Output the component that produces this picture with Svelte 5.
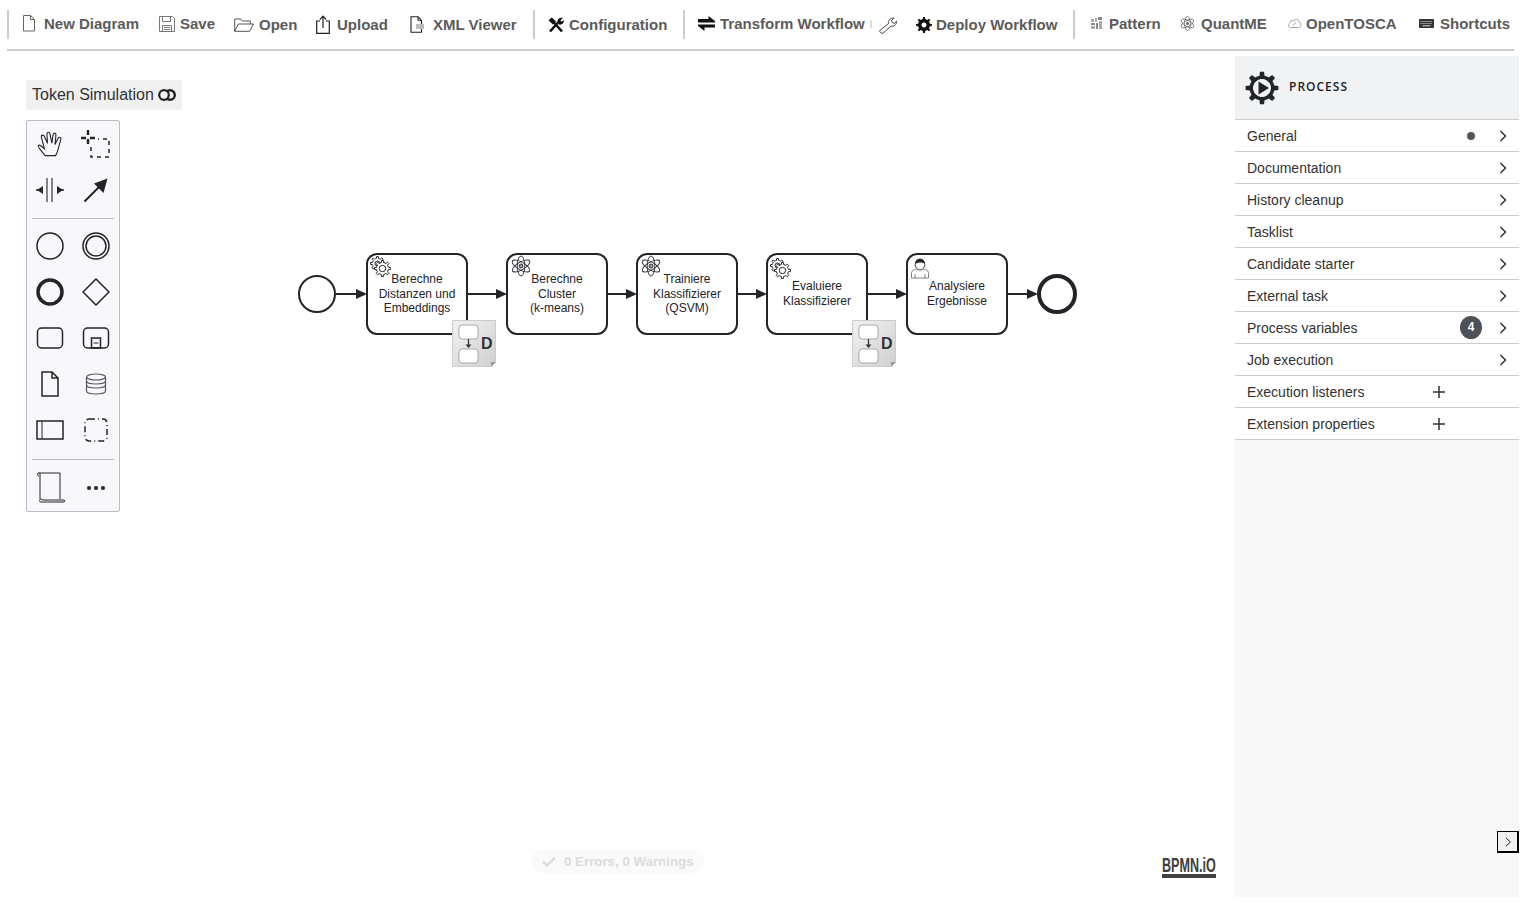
<script>
  const tools = [
    { id: 'sep', w: 15, sep: true },
    { id: 'new', label: 'New Diagram', w: 137, iw: 22 },
    { id: 'save', label: 'Save', w: 75, iw: 21 },
    { id: 'open', label: 'Open', w: 82, iw: 25, dy: 1 },
    { id: 'upload', label: 'Upload', w: 94, iw: 21, dy: 1 },
    { id: 'xml', label: 'XML Viewer', w: 123, iw: 23, dy: 1 },
    { id: 'sep', w: 15, sep: true },
    { id: 'config', label: 'Configuration', w: 135, iw: 21, dy: 1 },
    { id: 'sep', w: 15, sep: true },
    { id: 'transform', label: 'Transform Workflow', w: 172, iw: 22, dy: 0 },
    { id: 'mini', w: 9, mini: true },
    { id: 'wrench', w: 37, iw: 18, dy: 2 },
    { id: 'gear', label: 'Deploy Workflow', w: 157, iw: 20, dy: 1 },
    { id: 'sep', w: 17, sep: true },
    { id: 'pattern', label: 'Pattern', w: 90, iw: 19 },
    { id: 'atom', label: 'QuantME', w: 107, iw: 21 },
    { id: 'cloud', label: 'OpenTOSCA', w: 132, iw: 19 },
    { id: 'keys', label: 'Shortcuts', w: 96, iw: 21 }
  ];

  const rows = [
    { label: 'General', dot: true, arrow: true },
    { label: 'Documentation', arrow: true },
    { label: 'History cleanup', arrow: true },
    { label: 'Tasklist', arrow: true },
    { label: 'Candidate starter', arrow: true },
    { label: 'External task', arrow: true },
    { label: 'Process variables', badge: 4, arrow: true },
    { label: 'Job execution', arrow: true },
    { label: 'Execution listeners', plus: true },
    { label: 'Extension properties', plus: true }
  ];

  const tasks = [
    { x: 367, icon: 'service', lines: ['Berechne', 'Distanzen und', 'Embeddings'], top: 283, deploy: true },
    { x: 507, icon: 'atom', lines: ['Berechne', 'Cluster', '(k-means)'], top: 283 },
    { x: 637, icon: 'atom', lines: ['Trainiere', 'Klassifizierer', '(QSVM)'], top: 283 },
    { x: 767, icon: 'service', lines: ['Evaluiere', 'Klassifizierer'], top: 290, deploy: true },
    { x: 907, icon: 'user', lines: ['Analysiere', 'Ergebnisse'], top: 290 }
  ];

  const arrows = [[336, 367], [467, 507], [607, 637], [737, 767], [867, 907], [1007, 1038]];

  function gear(cx, cy, ro, ri, n) {
    let d = '';
    const step = (Math.PI * 2) / n;
    for (let i = 0; i < n; i++) {
      const a = i * step;
      const pts = [
        [ri, a - step * 0.5],
        [ri, a - step * 0.26],
        [ro, a - step * 0.16],
        [ro, a + step * 0.16],
        [ri, a + step * 0.26]
      ];
      for (const [r, t] of pts) {
        d += (d ? 'L' : 'M') + (cx + r * Math.cos(t)).toFixed(2) + ' ' + (cy + r * Math.sin(t)).toFixed(2);
      }
    }
    return d + 'Z';
  }
</script>

{#snippet toolIcon(id)}
  {#if id === 'new'}
    <svg width="14" height="17" viewBox="0 0 14 17"><path d="M1.500.5h7l4 4v11.500h-11zM8.500.5v4h4" fill="#fff" stroke="#666" /></svg>
  {:else if id === 'save'}
    <svg width="16" height="16" viewBox="0 0 16 16"><path d="M.5.5h13l2 2v13H.5z" fill="#fff" stroke="#777" /><path d="M3.500.5v5h8v-5M3.500 15.500v-6h9v6M5 11.500h6M5 13.500h6" fill="none" stroke="#777" /></svg>
  {:else if id === 'open'}
    <svg width="20" height="14" viewBox="0 0 20 14"><path d="M.7 13.300V1h6l1.600 2h8v3M.7 13.300h15L19.400 6H4.300z" fill="#fff" stroke="#555" /></svg>
  {:else if id === 'upload'}
    <svg width="14" height="19" viewBox="0 0 14 19"><path d="M4 6H.7v12.300h12.600V6H10M7 13V1.500M3.800 4.700 7 1.200l3.200 3.500" fill="none" stroke="#222" stroke-width="1.200" /></svg>
  {:else if id === 'xml'}
    <svg width="15" height="17" viewBox="0 0 15 17"><path d="M1 .7h7l3.500 3.500v12H1zM8 .7v3.500h3.500" fill="#fff" stroke="#222" stroke-width="1.100" /><rect x="6" y="8" width="8" height="5" fill="#bbb" /></svg>
  {:else if id === 'config'}
    <svg width="16" height="16" viewBox="0 0 16 16"><path d="M2 14.500 11 4.500M14 14.500 5 4.500" stroke="#111" stroke-width="2.600" fill="none" /><path d="M.5 3.500 3.500.5 5 1.500 8 4.500 5 7.500zM9.500 4.500C9.500 2 12 0 15 1l-2.500 2.300 1 1.500 2.300-1.800c.6 3-2 5.500-4.800 4.500z" fill="#111" /></svg>
  {:else if id === 'transform'}
    <svg width="17" height="15" viewBox="0 0 17 15"><path d="M0 3h10.500V0L17 5v1.500H0zM17 8.500v3H6.500V15L0 10V8.500z" fill="#111" /></svg>
  {:else if id === 'wrench'}
    <svg width="18" height="17" viewBox="0 0 18 17"><path d="M.8 13.500 9.500 6.500C9 3.500 11.500.5 15 1.200l-2.500 2.500.8 2 2.200.6 2-2.200c.4 3.500-2.500 5.500-5.500 5L4 16.200c-1.200.8-4-1.300-3.200-2.700z" fill="#fff" stroke="#333" stroke-width=".9" /></svg>
  {:else if id === 'gear'}
    <svg width="16" height="16" viewBox="0 0 16 16"><path fill-rule="evenodd" d={gear(8, 8, 8, 6, 8) + 'M8 5.500a2.500 2.500 0 1 0 .01 0z'} fill="#111" /></svg>
  {:else if id === 'pattern'}
    <svg width="13" height="13" viewBox="0 0 13 13"><g fill="#aaa"><rect x="1" y="2" width="3" height="3" /><rect x="5" y="1" width="2" height="4" /><rect x="8" y="0" width="4" height="3" fill="#888" /><rect x="1" y="6" width="4" height="2" fill="#888" /><rect x="1" y="9" width="4" height="3" /><rect x="6" y="6" width="2" height="6" fill="#888" /><rect x="9" y="4" width="3" height="8" /></g></svg>
  {:else if id === 'atom'}
    <svg width="15" height="15" viewBox="0 0 15 15"><g fill="none" stroke="#666" stroke-width=".8"><ellipse cx="7.500" cy="7.500" rx="7" ry="3" transform="rotate(90 7.500 7.500)" /><ellipse cx="7.500" cy="7.500" rx="7" ry="3" transform="rotate(30 7.500 7.500)" /><ellipse cx="7.500" cy="7.500" rx="7" ry="3" transform="rotate(150 7.500 7.500)" /></g><circle cx="7.500" cy="7.500" r="1.500" fill="#666" /></svg>
  {:else if id === 'cloud'}
    <svg width="15" height="11" viewBox="0 0 15 11"><path d="M3.500 9.500C1 9.500.5 6.500 2.500 5.500 2.500 3 5 2 6.500 3 8 .5 11.500 1 12 4c2.500.3 3 5.500-.5 5.500z" fill="#fff" stroke="#999" stroke-width=".9" /><path d="M6 8l3-4" stroke="#aaa" /></svg>
  {:else if id === 'keys'}
    <svg width="15" height="9" viewBox="0 0 15 9"><rect width="15" height="9" rx="1" fill="#333" /><path d="M1.500 2.500h12M1.500 4.500h12" stroke="#ddd" stroke-dasharray="1 1" /><path d="M3.500 6.800h8" stroke="#ddd" /></svg>
  {/if}
{/snippet}

{#snippet deployIcon(x, y)}
  <g transform="translate({x} {y})">
    <path d="M0.500 0.500H43.500V42L39 46.500H0.500Z" fill="url(#paper)" stroke="#ccc" />
    <path d="M39 47V42H44Z" fill="#999" />
    <rect x="7" y="5" width="19" height="14" rx="3" fill="#fff" stroke="#aaa" />
    <rect x="7" y="29" width="19" height="14" rx="3" fill="#fff" stroke="#aaa" />
    <path d="M16.500 19V26" stroke="#333" stroke-width="1.200" />
    <path d="M13.500 24.500H19.500L16.500 28Z" fill="#333" />
    <text x="29" y="29" class="d">D</text>
  </g>
{/snippet}

{#snippet serviceIcon(x, y)}
  <g transform="translate({x} {y})" fill="#fff" stroke="#22242a" stroke-width="1">
    <path d={gear(7, 7, 7, 5.200, 8)} />
    <circle cx="7" cy="7" r="2.500" />
    <path d={gear(12, 12, 8, 6, 8)} />
    <circle cx="12" cy="12" r="3.200" />
  </g>
{/snippet}

{#snippet atomIcon(x, y)}
  <g transform="translate({x} {y})" fill="none" stroke="#22242a" stroke-width=".9">
    <ellipse rx="10" ry="3.800" transform="rotate(90)" />
    <ellipse rx="10" ry="3.800" transform="rotate(30)" />
    <ellipse rx="10" ry="3.800" transform="rotate(150)" />
    <circle r="2" fill="#999" />
  </g>
{/snippet}

{#snippet userIcon(x, y)}
  <g transform="translate({x} {y})">
    <path d="M.5 20V14.500C.5 12 5 11.500 6 10.500H12C13 11.500 17.500 12 17.500 14.500V20Z" fill="#fff" stroke="#777" stroke-width=".9" />
    <path d="M4 16v4M14 16v4" fill="none" stroke="#777" stroke-width=".9" />
    <ellipse cx="9" cy="6.500" rx="4.800" ry="5.500" fill="#fff" stroke="#22242a" stroke-width=".9" />
    <path d="M4.200 6C4.500 1.500 7 1 9 1s4.500.8 4.800 5C12 4 7 4 4.200 6Z" fill="#22242a" />
  </g>
{/snippet}

<div class="page">
  <nav class="toolbar">
    {#each tools as t}
      <div class="tool" style:width="{t.w}px" style:top="{t.sep ? 1 : (t.dy ?? 0)}px">
        {#if t.sep}
          <span class="sep"></span>
        {:else if t.mini}
          <span class="mini"></span>
        {:else}
          <span class="ico" style:width="{t.iw}px">{@render toolIcon(t.id)}</span>
          {#if t.label}<span class="lbl">{t.label}</span>{/if}
        {/if}
      </div>
    {/each}
  </nav>

  <main class="main">
    <section class="canvas">
      <svg class="diagram" width="1235" height="846" viewBox="0 51 1235 846">
        <defs>
          <linearGradient id="paper" x1="0" y1="0" x2="1" y2="1">
            <stop offset="0" stop-color="#f2f2f2" />
            <stop offset="1" stop-color="#cfcfcf" />
          </linearGradient>
        </defs>
        <circle cx="317" cy="294" r="18" class="ev" stroke-width="2" />
        <circle cx="1057" cy="294" r="18" class="ev" stroke-width="4" />
        {#each arrows as [a, b]}
          <path d="M{a} 294H{b - 8}" class="flow" />
          <path d="M{b - 11} 289L{b} 294L{b - 11} 299Z" fill="#22242a" />
        {/each}
        {#each tasks as t}
          <rect x={t.x} y="254" width="100" height="80" rx="10" class="task" />
          {#each t.lines as line, i}
            <text x={t.x + 50} y={t.top + i * 14.6} class="tl">{line}</text>
          {/each}
          {#if t.icon === 'service'}
            {@render serviceIcon(t.x + 3.500, t.x > 700 ? 258.500 : 256.500)}
          {:else if t.icon === 'atom'}
            {@render atomIcon(t.x + 14, 266)}
          {:else}
            {@render userIcon(t.x + 4, 258)}
          {/if}
          {#if t.deploy}
            {@render deployIcon(t.x + 85, 320)}
          {/if}
        {/each}
      </svg>

      <div class="token">Token Simulation
        <svg width="18" height="12" viewBox="0 0 18 12"><circle cx="12" cy="6" r="4.800" fill="#f0f0f0" stroke="#222" stroke-width="2.400" /><circle cx="6" cy="6" r="4.800" fill="#f0f0f0" stroke="#222" stroke-width="2.200" /></svg>
      </div>

      <div class="palette">
        <div class="cell"><svg width="26" height="27" viewBox="1.500 2.500 21 21"><path d="M8 22C6 19 2 15 2.500 14c.8-1.500 3 .5 5 2.500L5 7c-.3-1.800 1.800-2.200 2.500-.5L10 12 9.500 4.500c0-1.800 2.300-1.800 2.500 0L13.500 12l1-7c.2-1.800 2.400-1.500 2.300.3L16 13l2.500-5c.8-1.500 2.800-.8 2.200 1L18.500 17c-.5 2-1 3.500-2 5z" fill="none" stroke="#22242a" stroke-width=".9" /></svg></div>
        <div class="cell"><svg width="30" height="30" viewBox="0 0 30 30"><path d="M0 9h5M9 9h5M7 1v5M7 10v5" stroke="#22242a" stroke-width="2.500" fill="none" /><path d="M10 18v10h18V10H17" fill="none" stroke="#22242a" stroke-width="1.500" stroke-dasharray="4 4" /></svg></div>
        <div class="cell"><svg width="30" height="26" viewBox="0 0 30 26"><path d="M12 1v24M17 1v24" stroke="#22242a" stroke-width="1.100" /><path d="M1 13h3M26 13h3" stroke="#22242a" stroke-width="1.500" /><path d="M2 13l6-4v8zM28 13l-6-4v8z" fill="#22242a" /></svg></div>
        <div class="cell"><svg width="26" height="26" viewBox="0 0 26 26"><path d="M1.500 24.500 16 10" stroke="#22242a" stroke-width="2" /><path d="M24.500 1.500 20.500 16 11 6.500z" fill="#22242a" /></svg></div>
        <div class="rule"></div>
        <div class="cell"><svg width="28" height="28" viewBox="0 0 28 28"><circle cx="14" cy="14" r="13" class="pi" /></svg></div>
        <div class="cell"><svg width="28" height="28" viewBox="0 0 28 28"><circle cx="14" cy="14" r="13" class="pi" /><circle cx="14" cy="14" r="10" class="pi" /></svg></div>
        <div class="cell"><svg width="28" height="28" viewBox="0 0 28 28"><circle cx="14" cy="14" r="12" fill="none" stroke="#22242a" stroke-width="3.500" /></svg></div>
        <div class="cell"><svg width="28" height="28" viewBox="0 0 28 28"><path d="M14 1 27 14 14 27 1 14z" class="pi" /></svg></div>
        <div class="cell"><svg width="28" height="24" viewBox="0 0 28 24"><rect x="1.500" y="2" width="25" height="20" rx="4" class="pi" /></svg></div>
        <div class="cell"><svg width="28" height="24" viewBox="0 0 28 24"><rect x="1.500" y="2" width="25" height="20" rx="4" class="pi" /><rect x="9.500" y="12" width="9" height="10" class="pi" stroke-width="1" /><path d="M11.500 17h5" stroke="#22242a" /></svg></div>
        <div class="cell"><svg width="18" height="26" viewBox="0 0 18 26"><path d="M1 1h10l6 6v18H1zM11 1v6h6" class="pi" /></svg></div>
        <div class="cell"><svg width="22" height="22" viewBox="0 0 22 22"><path d="M1.500 4v14c0 4 19 4 19 0V4" class="pg" /><ellipse cx="11" cy="4" rx="9.500" ry="3" class="pg" /><path d="M1.500 8c0 4 19 4 19 0M1.500 12c0 4 19 4 19 0" class="pg" /></svg></div>
        <div class="cell"><svg width="30" height="20" viewBox="0 0 30 20"><rect x="2" y="1" width="26" height="18" class="pi" /><path d="M7 1v18" stroke="#22242a" /></svg></div>
        <div class="cell"><svg width="24" height="24" viewBox="0 0 24 24"><rect x="1" y="1" width="22" height="22" rx="4" class="pi" stroke-dasharray="6 3 1 3" /></svg></div>
        <div class="rule last"></div>
        <div class="cell"><svg width="30" height="32" viewBox="0 0 30 32"><path d="M3 1H25V27M5 1V27M4 1c-2 0-2 3 0 3M8 28H29c1 0 1 2 0 2H6c-2 0-2-3 0-3z" fill="none" stroke="#22242a" /></svg></div>
        <div class="cell dots"><svg width="20" height="6" viewBox="0 0 20 6"><circle cx="3" cy="3" r="2" fill="#22242a" /><circle cx="10" cy="3" r="2" fill="#22242a" /><circle cx="17" cy="3" r="2" fill="#22242a" /></svg></div>
      </div>

      <div class="status">
        <svg width="14" height="11" viewBox="0 0 14 11"><path d="M1 5.500 5 9.500 13 1.500" fill="none" stroke="#ddd" stroke-width="2.500" /></svg>
        <span>0 Errors, 0 Warnings</span>
      </div>

      <div class="logo"><span>BPMN.iO</span></div>
    </section>

    <aside class="panel">
      <header class="phead">
        <svg width="34" height="34" viewBox="0 0 34 34"><path fill-rule="evenodd" d={gear(17, 17, 16.500, 12.500, 8) + 'M17 8a9 9 0 1 0 .01 0z'} fill="#22242a" /><path d="M13.500 10.500 24 17 13.500 23.500z" fill="#22242a" /></svg>
        <span>PROCESS</span>
      </header>
      {#each rows as r}
        <div class="row">
          <span class="rl">{r.label}</span>
          {#if r.dot}<span class="dotm"></span>{/if}
          {#if r.badge}<span class="badge">{r.badge}</span>{/if}
          {#if r.plus}
            <svg class="plus" width="12" height="12" viewBox="0 0 12 12"><path d="M6 0v12M0 6h12" stroke="#333" stroke-width="1.500" /></svg>
          {/if}
          {#if r.arrow}
            <svg class="chev" width="8" height="12" viewBox="0 0 8 12"><path d="M1.500 1 6.500 6 1.500 11" fill="none" stroke="#333" stroke-width="1.500" /></svg>
          {/if}
        </div>
      {/each}
      <button class="toggle" aria-label="Collapse"><svg width="7" height="10" viewBox="0 0 7 10"><path d="M1 1l4.500 4L1 9" fill="none" stroke="#222" /></svg></button>
    </aside>
  </main>
</div>

<style>
  :global(body) { margin: 0; background: #fff; }
  .page { width: 1523px; height: 907px; overflow: hidden; display: flex; flex-direction: column; font-family: "Liberation Sans", Arial, sans-serif; }
  .toolbar { display: flex; align-items: center; height: 47px; padding-bottom: 2px; margin: 0 9px 0 7px; border-bottom: 2px solid #ccc; }
  .tool { position: relative; display: flex; align-items: center; flex: none; height: 29px; white-space: nowrap; }
  .sep { width: 2px; height: 29px; background: #ccc; }
  .mini { width: 2px; height: 8px; background: #ddd; }
  .ico { display: flex; align-items: center; flex: none; }
  .lbl { font-size: 15px; font-weight: 700; color: #5b5b5b; }
  .main { flex: 1; display: flex; min-height: 0; }
  .canvas { position: relative; width: 1235px; flex: none; }
  .diagram { position: absolute; inset: 0; }
  .ev { fill: #fff; stroke: #22242a; }
  .flow { stroke: #22242a; stroke-width: 2; fill: none; }
  .task { fill: #fff; stroke: #22242a; stroke-width: 2; }
  .tl { font-size: 12px; fill: #22242a; text-anchor: middle; font-family: "Liberation Sans", Arial, sans-serif; }
  .d { font-size: 16px; font-weight: 700; fill: #333; font-family: "Liberation Sans", Arial, sans-serif; }
  .token { position: absolute; left: 26px; top: 29px; width: 150px; height: 30px; padding-left: 6px; background: #f0f0f0; font-size: 16px; line-height: 30px; color: #333; white-space: nowrap; display: flex; gap: 4px; align-items: center; }
  .palette { position: absolute; left: 26px; top: 69px; width: 92px; border: 1px solid #b9bcc6; border-radius: 2px; background: #f8f8fb; display: grid; grid-template-columns: 46px 46px; }
  .cell { height: 46px; display: flex; align-items: center; justify-content: center; }
  .rule { grid-column: 1 / 3; height: 1px; margin: 5px 5px 4px; background: #b9bcc6; }
  .rule.last { margin-top: 6px; margin-bottom: 5px; }
  .pi { fill: none; stroke: #22242a; stroke-width: 1.500; }
  .pg { fill: none; stroke: #55585f; stroke-width: 1.200; }
  .status { position: absolute; left: 532px; top: 798px; width: 172px; height: 24px; box-sizing: border-box; padding-left: 10px; display: flex; align-items: center; gap: 8px; border-radius: 12px; background: #fafafa; color: #dcdcdc; font-size: 13.300px; font-weight: 700; white-space: nowrap; }
  .logo { position: absolute; left: 1162px; top: 805px; width: 54px; height: 18px; border-bottom: 4px solid #404040; }
  .logo span { display: block; width: max-content; font-size: 21px; line-height: 18px; font-weight: 700; color: #404040; transform: scaleX(.6); transform-origin: left center; }
  .panel { position: relative; width: 284px; flex: none; margin: 5px 4px 10px 0; background: #f8f8f8; }
  .phead { height: 63px; display: flex; align-items: center; gap: 10px; padding-left: 10px; background: #f1f2f3; border-bottom: 1px solid #ccc; box-sizing: content-box; }
  .phead span { position: relative; top: -1px; font-size: 12px; letter-spacing: 1px; color: #22242a; font-family: "Open Sans", sans-serif; font-weight: 600; }
  .row { position: relative; height: 31px; padding-left: 12px; display: flex; align-items: center; background: #fff; border-bottom: 1px solid #ccc; }
  .rl { font-size: 14px; color: #333; }
  .dotm { position: absolute; left: 232px; top: 12px; width: 8px; height: 8px; border-radius: 50%; background: #52555e; }
  .badge { position: absolute; left: 225px; top: 4px; width: 22px; height: 23px; border-radius: 50%; background: #4d5059; color: #fff; font-size: 12px; font-weight: 700; line-height: 23px; text-align: center; }
  .chev { position: absolute; left: 264px; top: 10px; }
  .plus { position: absolute; left: 198px; top: 10px; }
  .toggle { position: absolute; right: 0; top: 775px; width: 22px; height: 22px; padding: 0 0 0 2px; box-sizing: border-box; background: #f1f1f1; border: 1px solid #000; border-right-width: 2px; border-bottom-width: 2px; display: flex; align-items: center; justify-content: center; }
</style>
